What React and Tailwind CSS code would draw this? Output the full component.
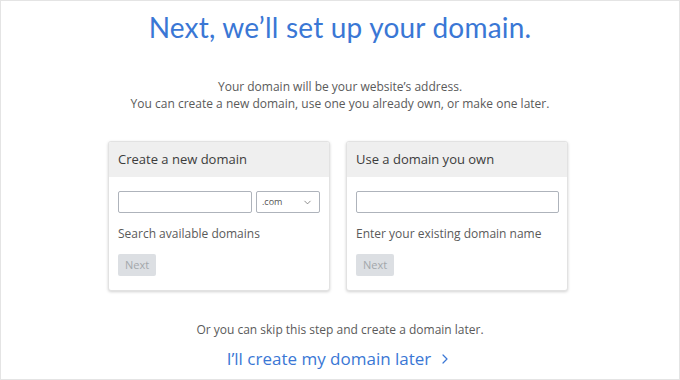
import { ChevronDown, ChevronRight } from 'lucide-react'

function DomainCard({ title, hint, children }) {
  return (
    <div className="w-[222px] h-[150px] bg-white rounded-[3px] border border-[#e2e2e2] shadow-[0_1px_3px_rgba(0,0,0,0.18)] overflow-hidden">
      <div className="h-[35px] bg-[#efefef] flex items-center px-[9px] text-[13px] text-[#3c3c3c]">
        {title}
      </div>
      <div className="px-[9px] pt-[14px]">
        {children}
        <div className="mt-[13px] text-[12px] text-[#5a5a5a] leading-[16px]">{hint}</div>
        <button className="block mt-[12px] h-[22px] px-[7px] rounded-[2px] bg-[#dcdfe3] text-[11px] text-[#a3a7ab]">
          Next
        </button>
      </div>
    </div>
  )
}

export default function App() {
  return (
    <div
      className="w-[680px] h-[380px] border border-[#e4e4e4] bg-white flex flex-col items-center"
      style={{ fontFamily: '"Open Sans", "Liberation Sans", sans-serif' }}
    >
      <h1
        className="mt-[6px] text-[28px] leading-[40px] text-[#3a77d5] tracking-[0.2px]"
        style={{ fontFamily: 'Lato, "Open Sans", sans-serif' }}
      >
        Next, we’ll set up your domain.
      </h1>

      <div className="mt-[31px] text-[12px] leading-[17px] text-[#5a5a5a] text-center">
        <p>Your domain will be your website’s address.</p>
        <p>You can create a new domain, use one you already own, or make one later.</p>
      </div>

      <div className="mt-[29px] flex gap-[16px] ml-[-4px]">
        <DomainCard title="Create a new domain" hint="Search available domains">
          <div className="flex gap-[4px]">
            <input className="block w-[134px] h-[22px] border border-[#aeb3bb] rounded-[2px] outline-none" />
            <div className="w-[65px] h-[22px] border border-[#aeb3bb] rounded-[2px] flex items-center justify-between pl-[5px] pr-[6px] text-[9px] text-[#555]">
              <span>.com</span>
              <ChevronDown size={11} strokeWidth={1.6} className="text-[#666]" />
            </div>
          </div>
        </DomainCard>
        <DomainCard title="Use a domain you own" hint="Enter your existing domain name">
          <input className="block w-[203px] h-[22px] border border-[#aeb3bb] rounded-[2px] outline-none" />
        </DomainCard>
      </div>

      <p className="mt-[31px] text-[12px] text-[#5a5a5a] leading-[16px]">
        Or you can skip this step and create a domain later.
      </p>
      <a className="mt-[10px] flex items-center gap-[6px] text-[17px] leading-[22px] text-[#3a77d5] cursor-pointer">
        I’ll create my domain later
        <ChevronRight size={16} strokeWidth={1.8} />
      </a>
    </div>
  )
}
